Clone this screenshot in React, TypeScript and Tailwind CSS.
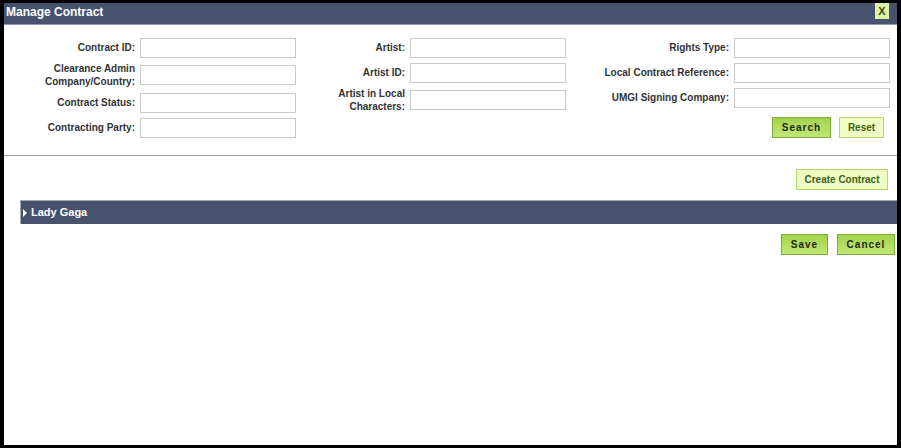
import React from 'react';

const LABEL = "text-right text-[10px] font-bold leading-[13px] text-[#333333]";
const INPUT = "h-[20px] w-[156px] border border-[#c9c9c9] bg-white px-1 text-[11px] outline-none";
const GREEN_BTN =
  "h-[21px] border border-[#7fa93b] bg-linear-to-b from-[#a5d34c] to-[#c0e675] text-[10px] font-bold tracking-[1px] text-[#1f2a12]";
const LIGHT_BTN =
  "h-[21px] border border-[#b5d66a] bg-[#effcc3] text-[10px] font-bold text-[#3d6215]";

interface Field {
  label: React.ReactNode;
}

function Column({ fields, labelWidth }: { fields: Field[]; labelWidth: string }) {
  return (
    <div className="flex flex-col gap-[4px]">
      {fields.map((f, i) => (
        <div key={i} className="flex min-h-[21px] items-center gap-[5px]">
          <label className={`${LABEL} ${labelWidth}`}>{f.label}</label>
          <input type="text" className={INPUT} />
        </div>
      ))}
    </div>
  );
}

export default function App() {
  return (
    <div className="h-screen w-full bg-black pt-[3px] pb-[3px] pl-[4px] pr-[4px] font-['Liberation_Sans',Arial,sans-serif]">
      <div className="flex h-full flex-col bg-white">
        {/* title bar */}
        <div className="flex h-[22px] items-start justify-between border-b border-[#8d96ab] bg-[#47526f]">
          <span className="pl-[2px] text-[12px] font-bold leading-[19px] text-white">Manage Contract</span>
          <button className="mr-[8px] flex h-[16px] w-[14px] items-center justify-center bg-[#def1a4] text-[11px] font-bold leading-none text-[#2f4d12]">
            X
          </button>
        </div>

        {/* search form */}
        <div className="flex pt-[12px]">
          <Column
            labelWidth="w-[131px]"
            fields={[
              { label: 'Contract ID:' },
              { label: <>Clearance Admin<br />Company/Country:</> },
              { label: 'Contract Status:' },
              { label: 'Contracting Party:' },
            ]}
          />
          <div className="ml-[1px]">
            <Column
              labelWidth="w-[108px]"
              fields={[
                { label: 'Artist:' },
                { label: 'Artist ID:' },
                { label: <>Artist in Local<br />Characters:</> },
              ]}
            />
          </div>
          <div className="ml-[1px] flex flex-col">
            <Column
              labelWidth="w-[162px]"
              fields={[
                { label: 'Rights Type:' },
                { label: 'Local Contract Reference:' },
                { label: 'UMGI Signing Company:' },
              ]}
            />
            <div className="mt-[9px] flex justify-end gap-[8px] pr-[6px]">
              <button className={`${GREEN_BTN} w-[59px]`}>Search</button>
              <button className={`${LIGHT_BTN} w-[45px]`}>Reset</button>
            </div>
          </div>
        </div>

        <div className="mt-[17px] h-px bg-[#a3a3a3]" />

        <div className="mt-[13px] flex justify-end pr-[9px]">
          <button className={`${LIGHT_BTN} w-[92px]`}>Create Contract</button>
        </div>

        {/* contract group */}
        <div className="ml-[16px] mt-[10px] flex h-[24px] items-center gap-[4px] border-t border-l border-[#a3a8b5] bg-[#47526f] pl-[2px]">
          <svg width="4" height="8" viewBox="0 0 4 8" className="shrink-0">
            <path d="M0 0 L4 4 L0 8 Z" fill="#ffffff" />
          </svg>
          <span className="text-[11px] font-bold text-white">Lady Gaga</span>
        </div>

        <div className="mt-[10px] flex justify-end gap-[9px] pr-[2px]">
          <button className={`${GREEN_BTN} w-[47px]`}>Save</button>
          <button className={`${GREEN_BTN} w-[58px]`}>Cancel</button>
        </div>
      </div>
    </div>
  );
}
